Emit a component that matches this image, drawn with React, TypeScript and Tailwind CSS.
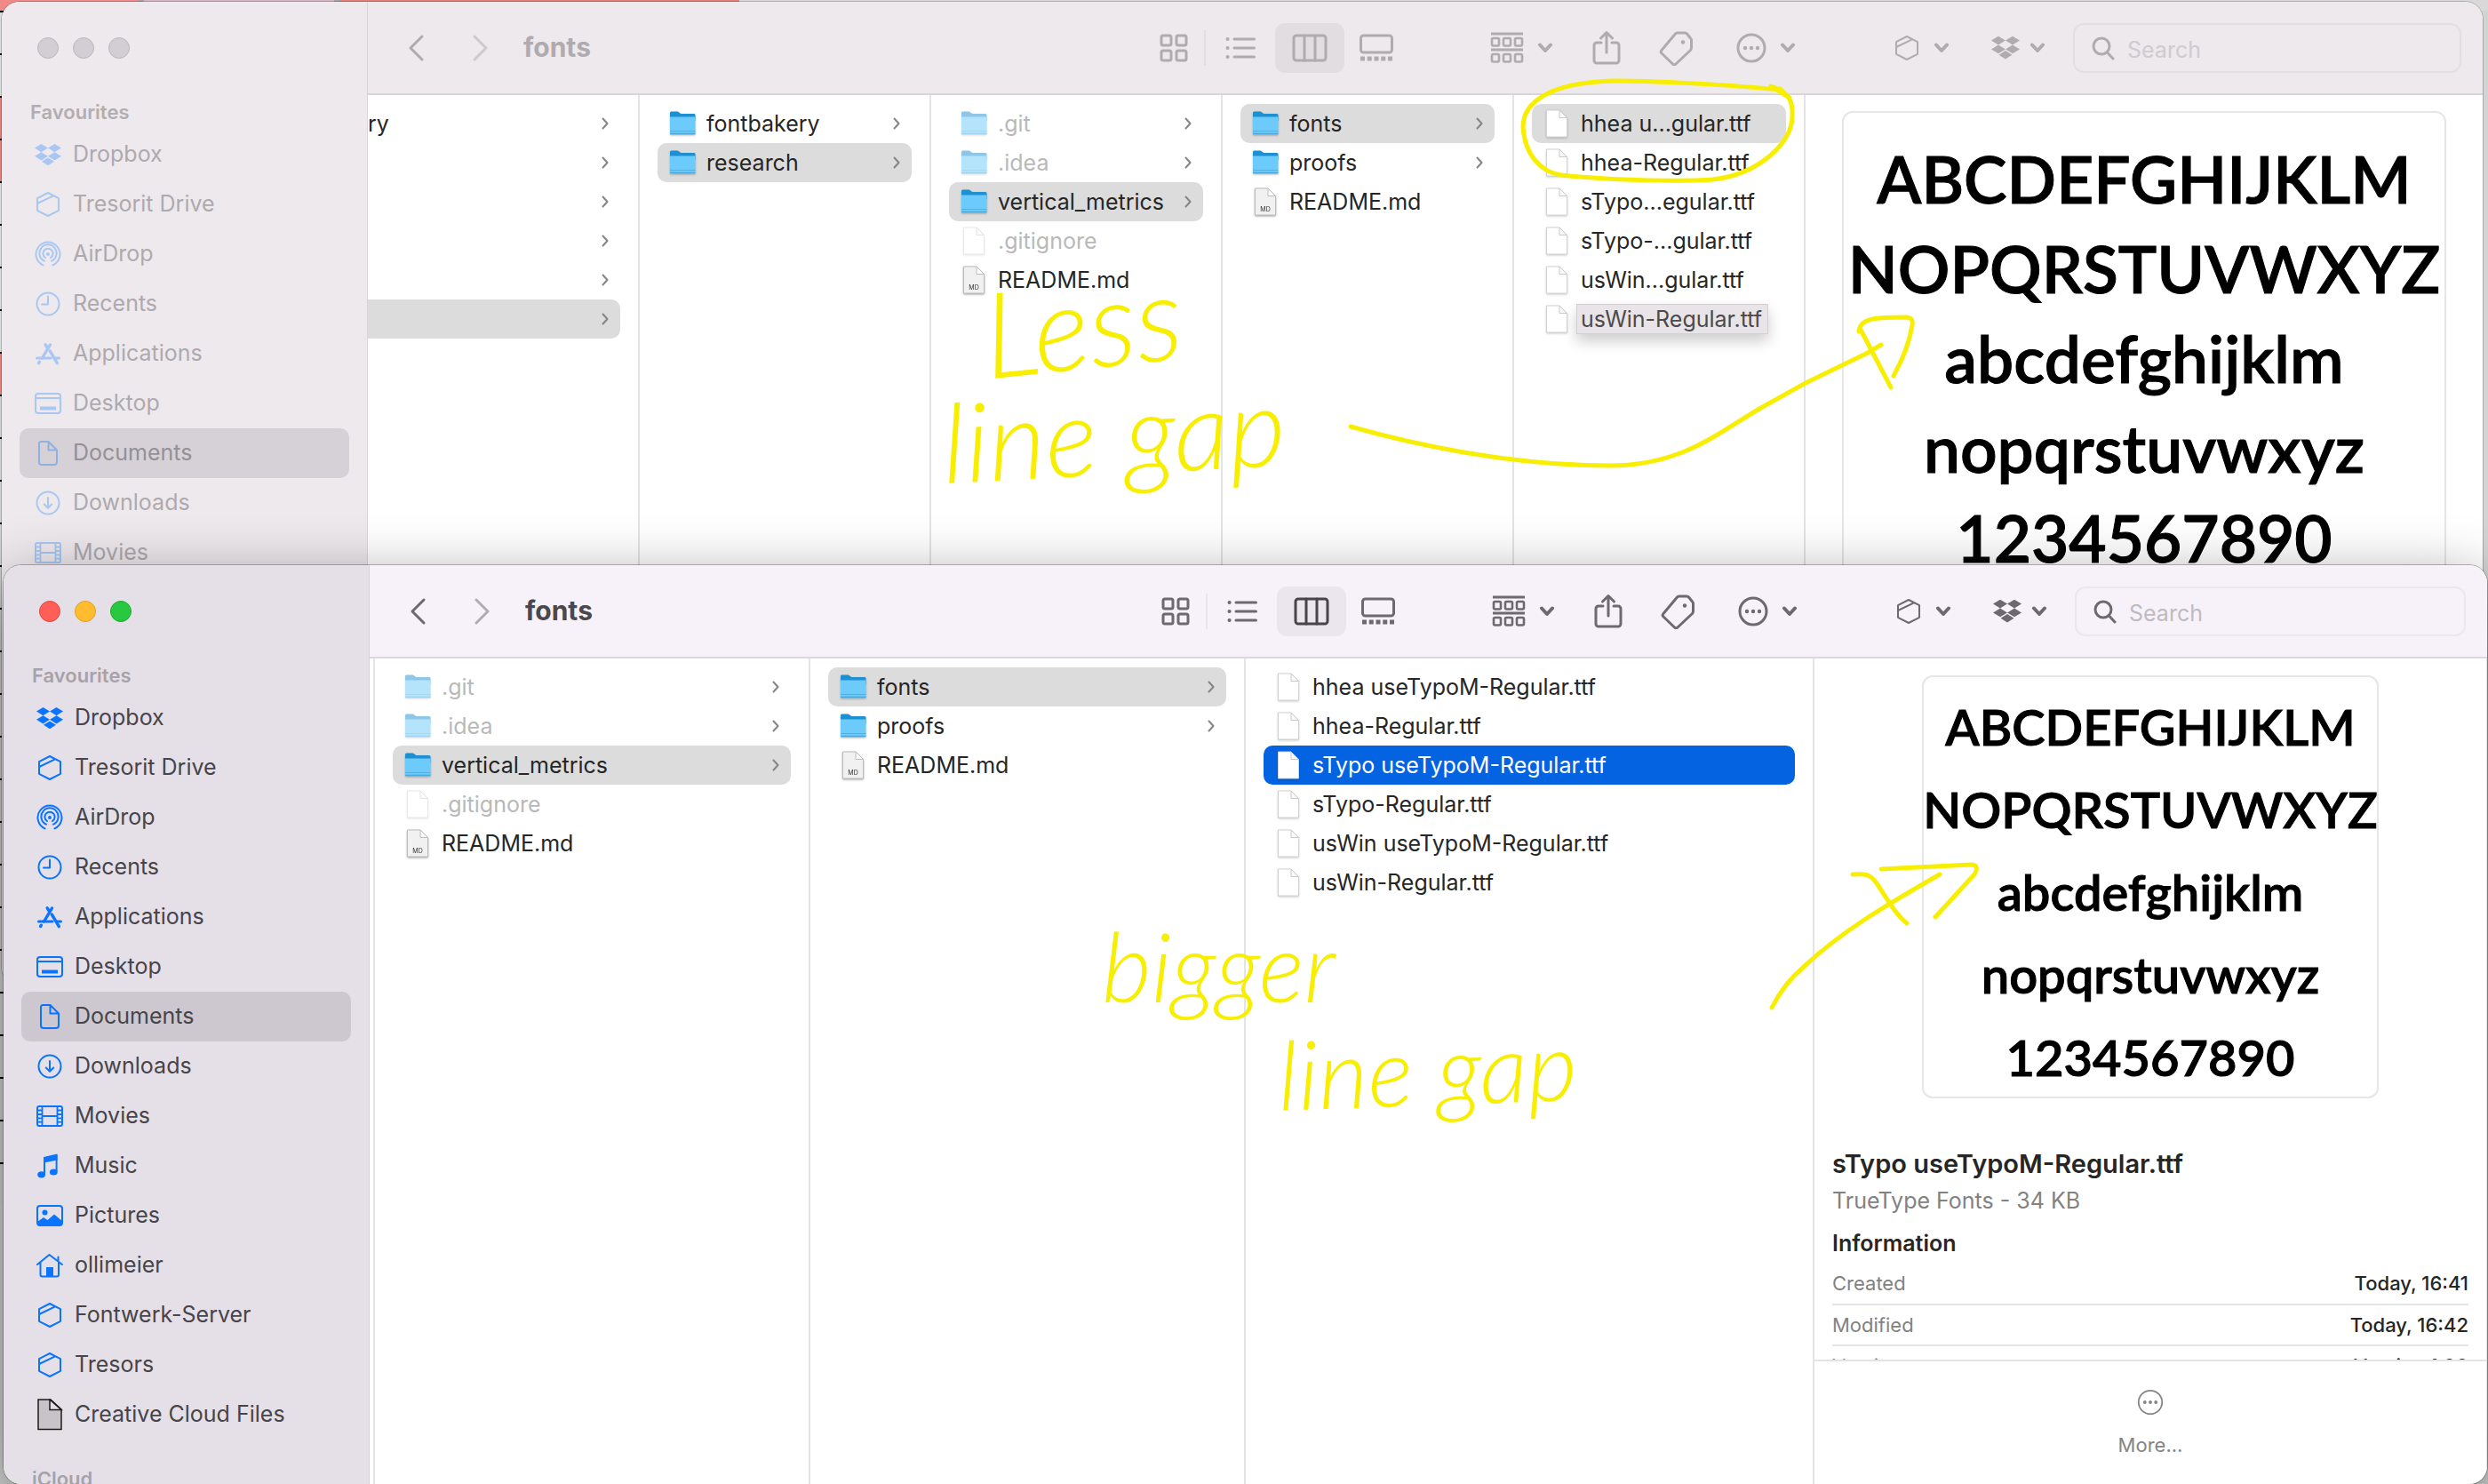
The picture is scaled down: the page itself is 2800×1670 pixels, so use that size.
import React from "react";

type IconProps = { className?: string };

const Svg = ({ w, h, className = "", sw = 2, children }: { w: number; h: number; className?: string; sw?: number; children: React.ReactNode }) => (
  <svg
    width={w}
    height={h}
    viewBox={`0 0 ${w} ${h}`}
    fill="none"
    stroke="currentColor"
    strokeWidth={sw}
    strokeLinecap="round"
    strokeLinejoin="round"
    className={`shrink-0 ${className}`}
    aria-hidden="true"
  >
    {children}
  </svg>
);

const dropboxPath =
  "M7.5 0 15 4.6 7.5 9.2 0 4.6Z M22.5 0 30 4.6 22.5 9.2 15 4.6Z M7.5 9.2 15 13.8 7.5 18.4 0 13.8Z M22.5 9.2 30 13.8 22.5 18.4 15 13.8Z M15 15.4 22 19.8 15 24.2 8 19.8Z";

const DropboxIcon = () => (
  <Svg w={30} h={25}>
    <path d={dropboxPath} fill="currentColor" stroke="none" />
  </Svg>
);
const DropboxToolbar = () => (
  <svg width="32" height="28" viewBox="0 0 30 25" fill="currentColor" aria-hidden="true" className="shrink-0">
    <path d={dropboxPath} />
  </svg>
);
const TresoritIcon = ({ className }: IconProps) => (
  <Svg w={28} h={30} className={className}>
    <path d="M14 2 26 8.2V21.8L14 28 2 21.8V8.2Z M2 14 20.5 5.2" />
  </Svg>
);
const AirDropIcon = () => (
  <Svg w={30} h={30}>
    <path d="M9.5 27A13.5 13.5 0 1 1 20.5 27 M11 22.3A9.6 9.6 0 1 1 19 22.3 M12 18.6A5.6 5.6 0 1 1 18 18.6" transform="translate(0 .4)" />
    <circle cx="15" cy="15" r="2" fill="currentColor" stroke="none" />
  </Svg>
);
const RecentsIcon = () => (
  <Svg w={30} h={30}>
    <circle cx="15" cy="15" r="12.5" />
    <path d="M15 6.5V15.5H8" />
  </Svg>
);
const ApplicationsIcon = () => (
  <Svg w={30} h={28}>
    <path d="M17.5 4 8.5 19 M4.6 24.5 5.4 23.2" strokeWidth="3.4" />
    <path d="M12.2 3.8 14 6.8 M17.2 11 25.4 24.6" strokeWidth="3.4" />
    <path d="M2.5 19H18 M23.5 19H27.5" strokeWidth="3" />
  </Svg>
);
const DesktopIcon = () => (
  <Svg w={30} h={26}>
    <rect x="1" y="2" width="28" height="22" rx="3" />
    <path d="M1 7H29" />
    <rect x="6" y="16.5" width="18" height="4" fill="currentColor" stroke="none" />
  </Svg>
);
const DocumentIcon = () => (
  <Svg w={30} h={30}>
    <path d="M7 2H15.5L25 11.5V25A3 3 0 0 1 22 28H8A3 3 0 0 1 5 25V4.5A2.5 2.5 0 0 1 7 2Z M15.5 2V11.5H25" />
  </Svg>
);
const DownloadsIcon = () => (
  <Svg w={30} h={30}>
    <circle cx="15" cy="15" r="12.5" />
    <path d="M15 9V20.5 M10.8 16.5 15 20.7 19.2 16.5" />
  </Svg>
);
const MoviesIcon = () => (
  <Svg w={30} h={26}>
    <rect x="1" y="2" width="28" height="22" rx="2" />
    <path d="M6.5 2V24 M23.5 2V24 M6.5 13H23.5 M1 6.5H6.5 M1 11H6.5 M1 15.3H6.5 M1 19.6H6.5 M23.5 6.5H29 M23.5 11H29 M23.5 15.3H29 M23.5 19.6H29" strokeWidth="1.8" />
  </Svg>
);
const MusicIcon = () => (
  <Svg w={30} h={30}>
    <path d="M8.2 5 23.5 1.5V8.5L8.2 11.5Z" fill="currentColor" stroke="none" />
    <path d="M9 6V24 M22.6 3V21" />
    <ellipse cx="5.6" cy="24.8" rx="4.4" ry="3.6" fill="currentColor" stroke="none" />
    <ellipse cx="19.3" cy="22" rx="4.4" ry="3.6" fill="currentColor" stroke="none" />
  </Svg>
);
const PicturesIcon = () => (
  <Svg w={30} h={26}>
    <rect x="1" y="2" width="28" height="22" rx="3" />
    <circle cx="9.5" cy="9.5" r="3" fill="currentColor" stroke="none" />
    <path d="M1 20 8 15 12.5 18 20 11.5 29 19V23L27 24.5H3L1 23Z" fill="currentColor" stroke="none" />
  </Svg>
);
const HomeIcon = () => (
  <Svg w={30} h={28}>
    <path d="M1 13 14.5 2 29 13 M4.5 11V24.5A2 2 0 0 0 6.5 26.5H23A2 2 0 0 0 25 24.5V11 M24.5 4.5V9" />
    <rect x="11" y="16" width="8" height="10.5" fill="currentColor" stroke="none" />
  </Svg>
);
const GenericFileIcon = () => (
  <svg width="30" height="36" viewBox="0 0 30 36" fill="#c8c3c8" stroke="#1b1b1b" strokeWidth="1.5" aria-hidden="true" className="shrink-0">
    <path d="M2 1H16L28 12V34.5H2Z" />
    <path d="M15 1V12.5H28L15 1Z" fill="#e5e0e7" />
  </svg>
);

type Item = { name: string; icon: () => React.ReactElement };
const favourites: Item[] = [
  { name: "Dropbox", icon: DropboxIcon },
  { name: "Tresorit Drive", icon: () => <TresoritIcon /> },
  { name: "AirDrop", icon: AirDropIcon },
  { name: "Recents", icon: RecentsIcon },
  { name: "Applications", icon: ApplicationsIcon },
  { name: "Desktop", icon: DesktopIcon },
  { name: "Documents", icon: DocumentIcon },
  { name: "Downloads", icon: DownloadsIcon },
  { name: "Movies", icon: MoviesIcon },
  { name: "Music", icon: MusicIcon },
  { name: "Pictures", icon: PicturesIcon },
  { name: "ollimeier", icon: HomeIcon },
  { name: "Fontwerk-Server", icon: () => <TresoritIcon /> },
  { name: "Tresors", icon: () => <TresoritIcon /> },
  { name: "Creative Cloud Files", icon: GenericFileIcon },
];
/* The back window is covered by the front one below this entry. */
const uncovered = favourites.slice(0, 9);

function Sidebar({ active }: { active: boolean }) {
  const lights = active
    ? ["bg-[#ff5f57] border-[#e2463f]", "bg-[#febc2e] border-[#dfa023]", "bg-[#28c840] border-[#1dad2b]"]
    : ["bg-[#d3ced3] border-[#bbb6bb]", "bg-[#d3ced3] border-[#bbb6bb]", "bg-[#d3ced3] border-[#bbb6bb]"];
  return (
    <aside
      className={`flex w-[412px] shrink-0 flex-col border-r px-5 ${
        active ? "border-[#d8d3da] bg-[#e5e0e7]" : "border-[#dad5d9] bg-[#eee9ed]"
      }`}
    >
      <div className="flex h-[104px] shrink-0 items-center gap-4 pl-5">
        {["Close", "Minimise", "Zoom"].map((label, i) => (
          <button key={label} aria-label={label} className={`size-6 rounded-full border ${lights[i]}`} />
        ))}
      </div>
      <h2 className={`h-10 shrink-0 pl-3 text-[22px] leading-10 font-semibold ${active ? "text-[#a7a2a9]" : "text-[#b2adb1]"}`}>
        Favourites
      </h2>
      <nav className="flex shrink-0 flex-col">
        {(active ? favourites : uncovered).map(({ name, icon: Icon }) => {
          const selected = name === "Documents";
          const bg = selected ? (active ? "bg-[#cdc8cf]" : "bg-[#d6d1d7]") : "";
          const text = active ? "text-[#47444a]" : selected ? "text-[#949096]" : "text-[#aea9ae]";
          return (
            <a key={name} href="#" className={`flex h-14 shrink-0 items-center gap-[13px] rounded-[10px] pl-[17px] text-[25px] ${bg} ${text}`}>
              <span className={`flex w-[30px] justify-center ${active ? "text-[#0a74ff]" : selected ? "text-[#8fb1e2]" : "text-[#a9c7f2]"}`}>
                <Icon />
              </span>
              {name}
            </a>
          );
        })}
      </nav>
      {active && <h2 className="shrink-0 pt-6 pl-3 text-[22px] leading-10 font-semibold text-[#a7a2a9]">iCloud</h2>}
    </aside>
  );
}

const Down = () => (
  <Svg w={18} h={12} sw={4}>
    <path d="M3 2.5 9 9 15 2.5" />
  </Svg>
);

function Toolbar({ active }: { active: boolean }) {
  return (
    <header
      className={`flex h-[105px] shrink-0 items-center border-b-2 ${
        active ? "border-[#dcd7de] bg-[#f7f2f9] text-[#6e6971]" : "border-[#dad5d9] bg-[#eee9ed] text-[#b0abaf]"
      }`}
    >
      <button aria-label="Back" className="ml-[43px] flex w-[22px] justify-center">
        <Svg w={20} h={32} sw={3}>
          <path d="M17 3 4 16 17 29" />
        </Svg>
      </button>
      <button aria-label="Forward" className="ml-[51px] flex w-[22px] justify-center opacity-50">
        <Svg w={20} h={32} sw={3}>
          <path d="M3 3 16 16 3 29" />
        </Svg>
      </button>
      <h1 className={`ml-[37px] w-[698px] text-[30px] font-bold ${active ? "text-[#4a474d]" : "text-[#b0abaf]"}`}>fonts</h1>
      <button aria-label="Icon view" className="flex h-14 w-[68px] items-center justify-center">
        <Svg w={32} h={32} sw={3}>
          <rect x="2" y="2" width="11" height="11" rx="2" />
          <rect x="19" y="2" width="11" height="11" rx="2" />
          <rect x="2" y="19" width="11" height="11" rx="2" />
          <rect x="19" y="19" width="11" height="11" rx="2" />
        </Svg>
      </button>
      <div className={`h-10 w-0.5 ${active ? "bg-[#e8e3ea]" : "bg-[#e2dde1]"}`} />
      <button aria-label="List view" className="flex h-14 w-[78px] items-center justify-center">
        <Svg w={34} h={28} sw={3}>
          <path d="M10 4H32.500M10 14H32.500M10 24H32.500" />
          <path d="M2.500 4H2.600M2.500 14H2.600M2.500 24H2.600" strokeWidth="4" />
        </Svg>
      </button>
      <button
        aria-label="Column view"
        className={`flex h-14 w-[78px] items-center justify-center rounded-[11px] ${active ? "bg-[#ebe6ed] text-[#47444a]" : "bg-[#e2dde1]"}`}
      >
        <Svg w={40} h={32} sw={3}>
          <rect x="2" y="2" width="36" height="28" rx="3" />
          <path d="M14 2V30 M26 2V30" />
        </Svg>
      </button>
      <button aria-label="Gallery view" className="flex h-14 w-[72px] items-center justify-center">
        <Svg w={40} h={32} sw={3}>
          <rect x="2.500" y="2" width="35" height="19" rx="3" />
          <path d="M2 28H38" strokeWidth="5" strokeDasharray="5 2.750" strokeLinecap="butt" />
        </Svg>
      </button>
      <button aria-label="Group" className="ml-[92px] flex items-center gap-[15px]">
        <Svg w={38} h={36} sw={3}>
          <path d="M1 2H37 M1 20H37" strokeLinecap="butt" />
          {[2, 15, 28].map((x) => (
            <g key={x} strokeWidth="2.600">
              <rect x={x} y="7" width="8" height="8.500" rx="1.500" />
              <rect x={x} y="25" width="8" height="8.500" rx="1.500" />
            </g>
          ))}
        </Svg>
        <Down />
      </button>
      <button aria-label="Share" className="ml-11">
        <Svg w={32} h={40} sw={3}>
          <path d="M10 14H5A3 3 0 0 0 2 17V34A3 3 0 0 0 5 37H27A3 3 0 0 0 30 34V17A3 3 0 0 0 27 14H22" />
          <path d="M16 25V2.500 M9.500 9 16 2.500 22.500 9" />
        </Svg>
      </button>
      <button aria-label="Tags" className="ml-[43px]">
        <Svg w={40} h={40} sw={3}>
          <path d="M20.500 3H29A3 3 0 0 1 31.500 4L35.500 9A3 3 0 0 1 36.500 11V20A4 4 0 0 1 35.500 22.500L19 38A2.500 2.500 0 0 1 15.500 38L3 26A2.500 2.500 0 0 1 3 22.500L18.500 4A3 3 0 0 1 20.500 3Z" />
          <circle cx="27" cy="13.500" r="2.200" fill="currentColor" stroke="none" />
        </Svg>
      </button>
      <button aria-label="Actions" className="ml-[47px] flex items-center gap-[15px]">
        <MoreGlyph />
        <Down />
      </button>
      <button aria-label="Tresorit" className="ml-[111px] flex items-center gap-4">
        <TresoritIcon />
        <Down />
      </button>
      <button aria-label="Dropbox" className="ml-[47px] flex items-center gap-[11px]">
        <DropboxToolbar />
        <Down />
      </button>
      <label
        className={`mr-6 ml-[31px] flex h-14 min-w-0 flex-1 items-center gap-3.5 rounded-xl border-2 pl-[19px] ${
          active ? "border-[#ebe6ed]" : "border-[#e3dee2]"
        }`}
      >
        <Svg w={26} h={28} sw={3}>
          <circle cx="11" cy="12" r="9" />
          <path d="M17.500 19 24 26" />
        </Svg>
        <input
          type="text"
          aria-label="Search"
          placeholder="Search"
          className={`min-w-0 flex-1 bg-transparent pt-[7px] text-[25px] outline-none ${
            active ? "placeholder:text-[#bfbac2]" : "placeholder:text-[#d0cbcf]"
          }`}
        />
      </label>
    </header>
  );
}

const MoreGlyph = ({ small = false }: { small?: boolean }) => (
  <svg width={small ? 30 : 34} height={small ? 30 : 34} viewBox="0 0 34 34" fill="none" stroke="currentColor" strokeWidth={small ? 2 : 3} aria-hidden="true">
    <circle cx="17" cy="17" r="15" />
    {[10, 17, 24].map((x) => (
      <circle key={x} cx={x} cy="17" r="2.200" fill="currentColor" stroke="none" />
    ))}
  </svg>
);

const Folder = () => (
  <svg width="30" height="30" viewBox="0 0 30 30" aria-hidden="true" className="drop-shadow-[0_1px_1px_rgba(0,0,0,0.25)]">
    <path d="M1 3A1.500 1.500 0 0 1 2.500 1.500H9.500C11 1.500 12 4 13.500 4H28A1.500 1.500 0 0 1 29.500 5.500V12H1Z" fill="#1e8fd0" />
    <path d="M1 7.500H29.500V26A1.500 1.500 0 0 1 28 27.500H2.500A1.500 1.500 0 0 1 1 26Z" fill="#6ccbfa" />
    <path d="M1 23.500H29.500" stroke="#4fb2e6" strokeWidth="1" />
    <path d="M1 26.500H29.500" stroke="#4aa9dc" strokeWidth="1.500" />
  </svg>
);
const FilePage = () => (
  <svg width="26" height="32" viewBox="0 0 26 32" aria-hidden="true" className="drop-shadow-[0_1px_1px_rgba(0,0,0,0.2)]">
    <path d="M1.500 1H16L24.500 10V31H1.500Z" fill="#fff" stroke="#d2d2d2" strokeWidth="1" />
    <path d="M16 1V9.500H24.500Z" fill="#fafafa" stroke="#c9c9c9" strokeWidth="1" />
  </svg>
);
const MdPage = () => (
  <svg width="26" height="32" viewBox="0 0 26 32" aria-hidden="true" className="drop-shadow-[0_1px_1px_rgba(0,0,0,0.35)]">
    <path d="M1.500 1H16L24.500 10V31H1.500Z" fill="#f1f1f1" stroke="#bdbdbd" strokeWidth="1" />
    <path d="M16 1V9.500H24.500Z" fill="#fff" stroke="#bdbdbd" strokeWidth="1" />
    <text x="13" y="27" textAnchor="middle" fontFamily="Inter, sans-serif" fontSize="7" fill="#333">MD</text>
  </svg>
);

const RowArrow = () => (
  <Svg w={8} h={14} className="text-[#858585]">
    <path d="M1.500 1.500 6.500 7 1.500 12.500" />
  </Svg>
);

type Entry = { name: string; kind: "folder" | "file" | "md"; dim?: boolean; selected?: "grey" | "blue"; dragged?: boolean };

function Row({ name, kind, dim, selected, dragged }: Entry) {
  const bg = selected === "blue" ? "bg-[#0363e1] text-white" : selected === "grey" ? "bg-[#dcdcdc] text-[#262626]" : "text-[#262626]";
  return (
    <li className={`flex h-11 items-center rounded-[10px] px-[13px] ${bg}`}>
      <span className={`mr-3 flex w-[30px] shrink-0 justify-center ${dim ? "opacity-50" : ""}`}>
        {kind === "folder" ? <Folder /> : kind === "md" ? <MdPage /> : <FilePage />}
      </span>
      {dragged ? (
        <span className="-ml-[5px] border border-[#d3cfd3] bg-[#e8e4e8] pr-1.5 pl-1 text-[#4c4a4c] shadow-[0_8px_16px_rgba(0,0,0,0.2)]">{name}</span>
      ) : (
        <span className={`min-w-0 flex-1 whitespace-nowrap ${dim ? "text-[#b9b9b9]" : ""}`}>{name}</span>
      )}
      {kind === "folder" && <RowArrow />}
    </li>
  );
}

function Column({ width, entries }: { width: string; entries: Entry[] }) {
  return (
    <ul className={`shrink-0 overflow-hidden border-r-2 border-[#e4e4e4] px-5 pt-2.5 text-[25px] leading-8 ${width}`}>
      {entries.map((e) => (
        <Row key={e.name} {...e} />
      ))}
    </ul>
  );
}

function ParentColumn() {
  return (
    <ul className="w-[306px] shrink-0 overflow-hidden border-r-2 border-[#e4e4e4] pt-2.5 pr-5 text-[25px] leading-8 text-[#262626]">
      <li className="flex h-11 items-center justify-between pr-[13px]">
        ry <RowArrow />
      </li>
      {[1, 2, 3, 4].map((n) => (
        <li key={n} className="flex h-11 items-center justify-end pr-[13px]">
          <RowArrow />
        </li>
      ))}
      <li className="flex h-11 items-center justify-end rounded-r-[10px] bg-[#dcdcdc] pr-[13px]">
        <RowArrow />
      </li>
    </ul>
  );
}

const specimen = ["ABCDEFGHIJKLM", "NOPQRSTUVWXYZ", "abcdefghijklm", "nopqrstuvwxyz", "1234567890"];

function Specimen({ className }: { className: string }) {
  return (
    <div
      className={`flex shrink-0 flex-col items-center rounded-xl border-2 border-[#e6e6e6] font-['Lato',sans-serif] font-semibold whitespace-nowrap text-black [-webkit-text-stroke:1px_black] ${className}`}
    >
      {specimen.map((line) => (
        <p key={line}>{line}</p>
      ))}
    </div>
  );
}

function BackWindow() {
  return (
    <section className="absolute top-0.5 right-[6px] left-0.5 flex h-[1106px] overflow-hidden rounded-[20px] bg-white shadow-[0_0_0_1px_rgba(0,0,0,0.2)]">
      <Sidebar active={false} />
      <div className="flex min-w-0 flex-1 flex-col">
        <Toolbar active={false} />
        <div className="flex min-h-0 flex-1">
          <ParentColumn />
          <Column width="w-[328px]" entries={[{ name: "fontbakery", kind: "folder" }, { name: "research", kind: "folder", selected: "grey" }]} />
          <Column
            width="w-[328px]"
            entries={[
              { name: ".git", kind: "folder", dim: true },
              { name: ".idea", kind: "folder", dim: true },
              { name: "vertical_metrics", kind: "folder", selected: "grey" },
              { name: ".gitignore", kind: "file", dim: true },
              { name: "README.md", kind: "md" },
            ]}
          />
          <Column
            width="w-[328px]"
            entries={[
              { name: "fonts", kind: "folder", selected: "grey" },
              { name: "proofs", kind: "folder" },
              { name: "README.md", kind: "md" },
            ]}
          />
          <Column
            width="w-[328px]"
            entries={[
              { name: "hhea u...gular.ttf", kind: "file", selected: "grey" },
              { name: "hhea-Regular.ttf", kind: "file" },
              { name: "sTypo...egular.ttf", kind: "file" },
              { name: "sTypo-...gular.ttf", kind: "file" },
              { name: "usWin...gular.ttf", kind: "file" },
              { name: "usWin-Regular.ttf", kind: "file", dragged: true },
            ]}
          />
          <div className="flex min-w-0 flex-1 flex-col items-center pt-[18px]">
            <Specimen className="h-[640px] w-[680px] pt-6 text-[73px] leading-[101px]" />
          </div>
        </div>
      </div>
    </section>
  );
}

function FrontWindow() {
  return (
    <section className="absolute top-[636px] right-px bottom-0 left-1 flex overflow-hidden rounded-[20px] bg-white shadow-[0_0_0_1px_rgba(0,0,0,0.25),0_20px_70px_rgba(0,0,0,0.45)]">
      <Sidebar active />
      <div className="flex min-w-0 flex-1 flex-col">
        <Toolbar active />
        <div className="flex min-h-0 flex-1">
          <div className="w-1.5 shrink-0 border-r-2 border-[#e4e4e4]" />
          <Column
            width="w-[490px]"
            entries={[
              { name: ".git", kind: "folder", dim: true },
              { name: ".idea", kind: "folder", dim: true },
              { name: "vertical_metrics", kind: "folder", selected: "grey" },
              { name: ".gitignore", kind: "file", dim: true },
              { name: "README.md", kind: "md" },
            ]}
          />
          <Column
            width="w-[490px]"
            entries={[
              { name: "fonts", kind: "folder", selected: "grey" },
              { name: "proofs", kind: "folder" },
              { name: "README.md", kind: "md" },
            ]}
          />
          <Column
            width="w-[640px]"
            entries={[
              { name: "hhea useTypoM-Regular.ttf", kind: "file" },
              { name: "hhea-Regular.ttf", kind: "file" },
              { name: "sTypo useTypoM-Regular.ttf", kind: "file", selected: "blue" },
              { name: "sTypo-Regular.ttf", kind: "file" },
              { name: "usWin useTypoM-Regular.ttf", kind: "file" },
              { name: "usWin-Regular.ttf", kind: "file" },
            ]}
          />
          <div className="flex min-w-0 flex-1 flex-col border-r border-[#e4e4e4]">
            <div className="flex min-h-0 flex-1 flex-col overflow-hidden px-5 pt-[19px]">
              <Specimen className="h-[476px] w-[514px] self-center pt-[9px] text-[56px] leading-[93px]" />
              <h2 className="mt-14 shrink-0 text-[29px] leading-9 font-semibold text-[#262626]">sTypo useTypoM-Regular.ttf</h2>
              <p className="mt-[7px] shrink-0 text-[25px] leading-8 text-[#828282]">TrueType Fonts - 34 KB</p>
              <h3 className="mt-4 shrink-0 text-[25px] leading-8 font-semibold text-[#262626]">Information</h3>
              <table className="mt-[7px] w-full text-[22px]">
                <tbody>
                  {[
                    ["Created", "Today, 16:41"],
                    ["Modified", "Today, 16:42"],
                    ["Version", "Version 1.00"],
                  ].map(([k, v]) => (
                    <tr key={k} className="h-[46px] border-b-2 border-[#e4e4e4]">
                      <th scope="row" className="text-left font-normal text-[#828282]">{k}</th>
                      <td className="text-right font-medium text-[#262626]">{v}</td>
                    </tr>
                  ))}
                </tbody>
              </table>
            </div>
            <div className="flex h-[140px] shrink-0 flex-col items-center border-t-2 border-[#e4e4e4] pt-[31px]">
              <button className="flex flex-col items-center gap-[17px] text-[22px] leading-8 text-[#858585]">
                <MoreGlyph small />
                More...
              </button>
            </div>
          </div>
        </div>
      </div>
    </section>
  );
}

const topStrip = [
  ["w-[155px]", "bg-[#f08a88]"],
  ["w-[7px]", "bg-[#a3a3a3]"],
  ["w-[214px]", "bg-[#d9b3c6]"],
  ["w-[7px]", "bg-[#a3a3a3]"],
  ["w-[449px]", "bg-[#e27f7b]"],
  ["flex-1", "bg-[#d9d9d9]"],
];
const leftStrip = [
  "bg-[#d8dcdb]", "bg-[#d8dcdb]", "bg-[#e27f7b]", "bg-[#e27f7b]", "bg-[#d8dcdb]",
  "bg-[#d8dcdb]", "bg-[#d8dcdb]", "bg-[#d8dcdb]", "bg-[#e27f7b]",
];

function Desktop() {
  return (
    <div className="flex min-h-screen flex-col bg-[#d2d4d3]">
      <div className="flex h-3 bg-[#e4e4e4]">
        {topStrip.map(([w, c], i) => (
          <div key={i} className={`${w} ${c}`} />
        ))}
      </div>
      <div className="flex w-5 flex-col">
        {Array.from({ length: 28 }, (_, i) => (
          <div key={i} className={`h-12 border-t-2 border-black ${leftStrip[i] ?? "bg-[#cfd1d0]"}`} />
        ))}
      </div>
    </div>
  );
}

/* Yellow pen marks laid over both windows. */
function PenMarks() {
  return (
    <div className="pointer-events-none absolute inset-0 font-['Lato',cursive] text-[#f7ee00] italic">
      <svg width="2800" height="1670" viewBox="0 0 2800 1670" fill="none" stroke="#f7ee00" strokeWidth="5" strokeLinecap="round" strokeLinejoin="round" className="absolute top-0 left-0" aria-hidden="true">
        <path d="M2014 110 1993 97 2003 101C1930 94 1850 91 1820 91 1750 92 1714 112 1714 143 1716 175 1735 194 1757 197 1820 204 1900 204 1928 202 1980 196 2018 160 2017 130 2018 112 2012 108 2003 100" />
        <path d="M1520 480C1590 500 1700 524 1812 524 1890 524 1930 490 1980 460L2034 430 2100 398 2117 388" />
        <path d="M2092 373C2093 358 2110 357 2146 357 2152 358 2153 361 2152 366 2149 385 2141 405 2131 423M2094 371 2128 436" />
        <path d="M1994 1134C2004 1114 2018 1098 2030 1088 2070 1050 2120 1020 2183 984" />
        <path d="M2085 984C2100 983 2105 984 2112 994 2124 1012 2134 1030 2146 1039M2117 978 2219 973Q2228 974 2222 984L2178 1032" />
      </svg>
      <p className="absolute top-[304px] left-[1106px] -rotate-6 text-[134px] leading-[120px] font-light">Less</p>
      <p className="absolute top-[426px] left-[1060px] -rotate-3 text-[124px] leading-[120px] font-light whitespace-nowrap">line gap</p>
      <p className="absolute top-[1026px] left-[1240px] text-[108px] leading-[120px] font-light">bigger</p>
      <p className="absolute top-[1142px] left-[1438px] -rotate-2 text-[108px] leading-[120px] font-light whitespace-nowrap">line gap</p>
    </div>
  );
}

export default function App() {
  return (
    <main className="relative min-h-screen overflow-hidden font-['Inter',sans-serif]">
      <Desktop />
      <BackWindow />
      <FrontWindow />
      <PenMarks />
    </main>
  );
}
